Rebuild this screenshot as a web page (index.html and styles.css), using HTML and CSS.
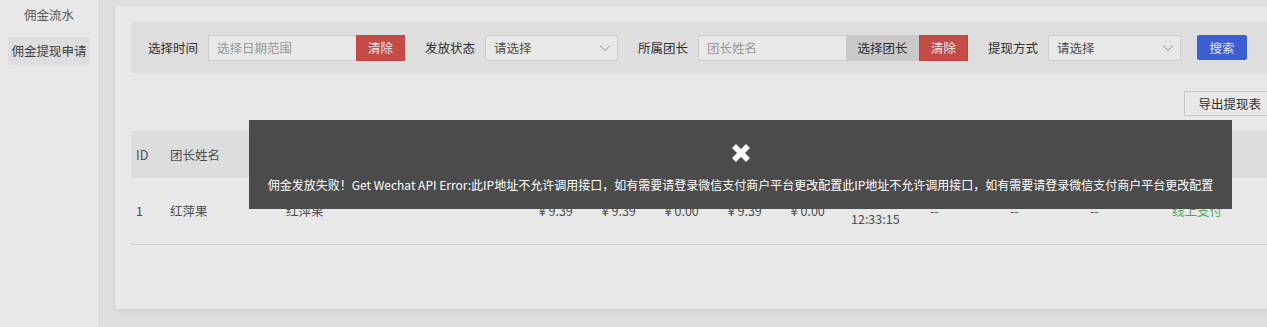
FILE: index.html
```html
<!DOCTYPE html>
<html>
    <head>
        <meta name="viewport" content="width=device-width">
        <title>佣金提现申请</title>
        <link rel="stylesheet" href="styles.css">
    </head>
    <body>
        <div class="page">
            <div class="side">
                <div class="side-item">佣金流水</div>
                <div class="side-item active">佣金提现申请</div>
            </div>
            <div class="main">
                <div class="card">
                    <div class="filter">
                        <span class="label">选择时间</span>
                        <div class="field">
                            <input class="ipt" type="text" placeholder="选择日期范围">
                            <button class="btn red">清除</button>
                        </div>
                        <span class="label">发放状态</span>
                        <div class="select">
                            <span>请选择</span>
                            <svg width="12" height="8" viewBox="0 0 12 8"><path d="M1 1.5l5 5 5-5" fill="none" stroke="#c8c8c8" stroke-width="1.3"/></svg>
                        </div>
                        <span class="label">所属团长</span>
                        <div class="field">
                            <input class="ipt" type="text" placeholder="团长姓名">
                            <button class="btn gray">选择团长</button>
                            <button class="btn red">清除</button>
                        </div>
                        <span class="label">提现方式</span>
                        <div class="select">
                            <span>请选择</span>
                            <svg width="12" height="8" viewBox="0 0 12 8"><path d="M1 1.5l5 5 5-5" fill="none" stroke="#c8c8c8" stroke-width="1.3"/></svg>
                        </div>
                        <button class="btn blue">搜索</button>
                    </div>

                    <div class="tools"><button class="btn-line">导出提现表</button></div>

                    <table class="list">
                        <colgroup>
                            <col style="width:34px"><col style="width:116px"><col style="width:250px">
                            <col style="width:63px"><col style="width:63px"><col style="width:63px"><col style="width:63px"><col style="width:63px">
                            <col style="width:79px"><col style="width:80px"><col style="width:80px"><col style="width:82px"><col>
                        </colgroup>
                        <thead>
                            <tr>
                                <th>ID</th><th>团长姓名</th><th>微信昵称</th>
                                <th>提现金额</th><th>实际到账</th><th>手续费</th><th>已发放</th><th>未发放</th>
                                <th>申请时间</th><th>审核人</th><th>审核时间</th><th>备注</th><th>提现方式</th>
                            </tr>
                        </thead>
                        <tbody>
                            <tr>
                                <td>1</td><td>红萍果</td><td>红萍果</td>
                                <td>￥9.39</td><td>￥9.39</td><td>￥0.00</td><td>￥9.39</td><td>￥0.00</td>
                                <td class="time">2019-05-21<br>12:33:15</td>
                                <td>--</td><td>--</td><td>--</td>
                                <td class="green">线上支付</td>
                            </tr>
                        </tbody>
                    </table>
                </div>
            </div>
        </div>

        <div class="mask"></div>
        <div class="toast">
            <svg class="toast-icon" width="22" height="22" viewBox="0 0 22 22"><path d="M4 4L18 18M18 4L4 18" stroke="#fff" stroke-width="5.5"/></svg>
            <div class="toast-text">佣金发放失败！Get Wechat API Error:此IP地址不允许调用接口，如有需要请登录微信支付商户平台更改配置此IP地址不允许调用接口，如有需要请登录微信支付商户平台更改配置</div>
        </div>
    </body>
</html>
```

FILE: styles.css
```css
html,body{margin:0;height:100%;overflow:hidden;}
body{font-family:"Noto Sans CJK SC","Noto Sans",sans-serif;font-size:12.5px;color:#333;}
button,input{font-family:inherit;font-size:12.5px;outline:none;}

.page{display:flex;height:100%;}

/* left menu */
.side{width:99px;flex:none;background:#fff;border-right:1px solid #ececec;padding-top:1px;}
.side-item{height:28px;line-height:28px;margin:0 9px 8px 8px;text-align:center;color:#646464;border-radius:3px;}
.side-item.active{background:#f4f4f4;color:#4a4a4a;}

.main{flex:1;background:#f4f4f4;padding:6px 0 0 15px;overflow:hidden;}
.card{width:1143px;background:#fff;padding:16px 16px 64px;box-shadow:0 2px 5px rgba(0,0,0,.07);}

/* search bar */
.filter
{
    display:flex;
    align-items:center;
    height:51px;
    width:1180px;
    padding-left:17px;
    background:#f4f4f4;
}
.label{width:48px;flex:none;margin-right:12px;color:#333;white-space:nowrap;}
.field{display:flex;margin-right:20px;}
.ipt{width:148px;height:26px;box-sizing:border-box;border:1px solid #e2e2e2;border-right:none;padding:0 8px;background:#fff;color:#555;}
.ipt::placeholder{color:#a8a8a8;}
.select
{
    display:flex;
    justify-content:space-between;
    align-items:center;
    width:133px;
    height:26px;
    box-sizing:border-box;
    border:1px solid #e2e2e2;
    border-radius:2px;
    padding:0 6px 0 8px;
    margin-right:20px;
    background:#fff;
    color:#555;
}
.btn{height:26px;border:none;padding:0;cursor:pointer;color:#fff;}
.btn.red{width:49px;background:#d9534f;border:1px solid #d84a46;}
.btn.gray{width:73px;background:#dddddd;color:#333;}
.btn.blue{width:50px;height:25px;background:#4169e8;border-radius:2px;margin-left:-4px;}

.tools{display:flex;justify-content:flex-end;margin-top:18px;}
.btn-line{height:25px;padding:0 12px 0 13px;background:#fff;border:1px solid #dcdcdc;color:#333;}

/* table */
.list{width:100%;table-layout:fixed;border-collapse:collapse;margin-top:15px;color:#555;}
.list th{height:47px;background:#f2f4f5;font-weight:normal;text-align:left;padding:0 5px;white-space:nowrap;overflow:hidden;}
.list td{height:64px;padding:0 5px 2px;border-bottom:1px solid #e5e5e5;white-space:nowrap;}
.list td.time{line-height:18px;}
.list td.green{color:#5cb85c;}

/* message layer */
.mask{position:fixed;left:0;top:0;right:0;bottom:0;background:rgba(0,0,0,.09);}
.toast
{
    position:fixed;
    left:249px;
    top:120px;
    width:983px;
    height:89px;
    box-sizing:border-box;
    padding-top:22px;
    background:#4b4b4b;
    color:#fff;
    text-align:center;
}
.toast-icon{display:block;margin:0 auto;}
.toast-text{margin-top:12px;white-space:nowrap;line-height:18px;font-size:12px;}
```
